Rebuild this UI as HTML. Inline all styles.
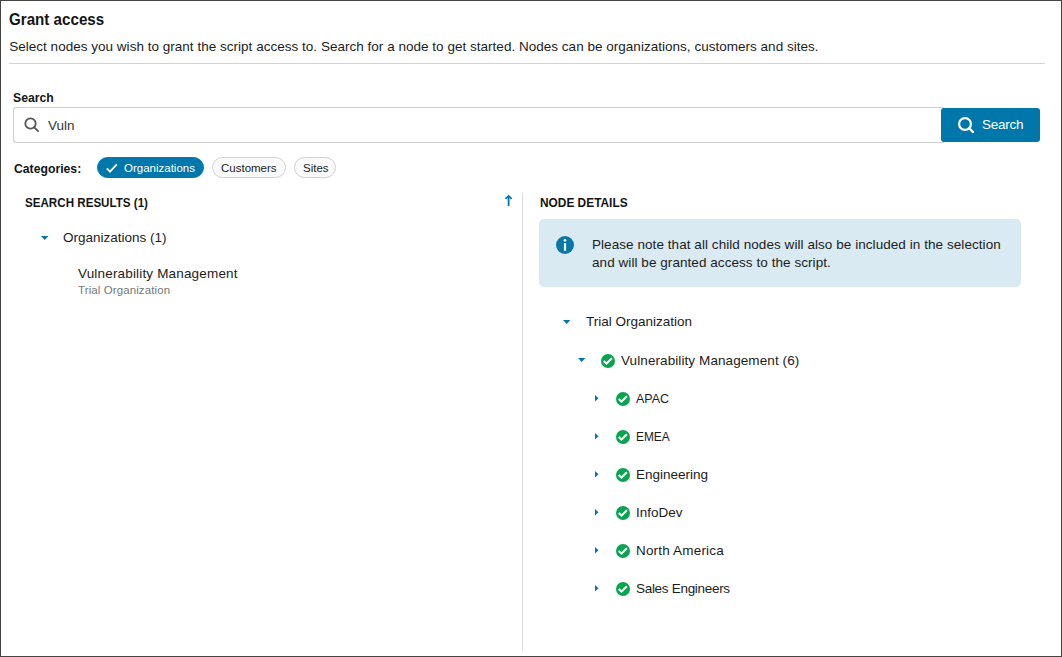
<!DOCTYPE html>
<html>
<head>
<meta charset="utf-8">
<style>
html,body{margin:0;padding:0;width:1062px;height:657px;overflow:hidden;background:#fff;}
body{font-family:"Liberation Sans",sans-serif;color:#1c1c1c;position:relative;}
.frame{position:absolute;left:0;top:0;width:1060px;height:655px;border:1px solid #444;}
.t{position:absolute;white-space:nowrap;line-height:1;}
.hr{position:absolute;left:9px;top:63px;width:1036px;height:1px;background:#d4d4d4;}
.input{position:absolute;left:13px;top:107px;width:930px;height:34px;border:1px solid #cfcfcf;border-right:none;border-radius:3px 0 0 3px;background:#fff;}
.btn{position:absolute;left:941px;top:108px;width:99px;height:34px;background:#0077aa;border-radius:3px;}
.chip{position:absolute;top:157px;height:19px;border-radius:11px;border:1px solid #d0d0d0;background:#fafafa;}
.chip.on{background:#0077aa;border-color:#0077aa;}
.divider{position:absolute;left:522px;top:193px;width:1px;height:458px;background:#dcdcdc;}
.info{position:absolute;left:539px;top:219px;width:482px;height:68px;background:#d9eaf2;border-radius:5px;}
svg{position:absolute;overflow:visible;}
</style>
</head>
<body>
<div class="frame"></div>
<div class="t" style="left:8.7px;top:11px;font-size:16.5px;font-weight:700;color:#141414;transform:scaleX(0.918);transform-origin:0 0;">Grant access</div>
<div class="t" style="left:9.2px;top:40px;font-size:13.5px;letter-spacing:0.02px;">Select nodes you wish to grant the script access to. Search for a node to get started. Nodes can be organizations, customers and sites.</div>
<div class="hr"></div>
<div class="t" style="left:13.3px;top:91px;font-size:13.5px;font-weight:700;color:#141414;transform:scaleX(0.905);transform-origin:0 0;">Search</div>
<div class="input"></div>
<svg style="left:23.6px;top:116.7px" width="16" height="16" viewBox="0 0 16 16"><circle cx="6.5" cy="6.5" r="5.2" fill="none" stroke="#555" stroke-width="1.8"/><line x1="10.3" y1="10.3" x2="14.1" y2="14.1" stroke="#555" stroke-width="1.8" stroke-linecap="round"/></svg>
<div class="t" style="left:48px;top:119px;font-size:13.5px;color:#333;">Vuln</div>
<div class="btn"></div>
<svg style="left:957.5px;top:116.6px" width="17" height="17" viewBox="0 0 17 17"><circle cx="7" cy="7" r="5.9" fill="none" stroke="#fff" stroke-width="2.2"/><line x1="11" y1="11" x2="15" y2="15" stroke="#fff" stroke-width="2.3" stroke-linecap="round"/></svg>
<div class="t" style="left:982px;top:118px;font-size:13.5px;letter-spacing:-0.25px;color:#fff;">Search</div>
<div class="t" style="left:13.6px;top:162px;font-size:13.5px;font-weight:700;color:#141414;transform:scaleX(0.905);transform-origin:0 0;">Categories:</div>
<div class="chip on" style="left:97px;width:105px;"></div>
<svg style="left:104.5px;top:161.5px" width="14" height="12" viewBox="0 0 14 12"><polyline points="1.8,6.3 5,9.6 11.8,2.4" fill="none" stroke="#fff" stroke-width="1.8"/></svg>
<div class="t" style="left:124px;top:163px;font-size:11.5px;color:#fff;">Organizations</div>
<div class="chip" style="left:212px;width:72px;"></div>
<div class="t" style="left:221px;top:163px;font-size:11.5px;">Customers</div>
<div class="chip" style="left:294px;width:40px;"></div>
<div class="t" style="left:303px;top:163px;font-size:11.5px;">Sites</div>
<div class="t" style="left:25.4px;top:196px;font-size:13.5px;font-weight:700;color:#141414;transform:scaleX(0.86);transform-origin:0 0;">SEARCH RESULTS (1)</div>
<svg style="left:504.8px;top:194px" width="8" height="13" viewBox="0 0 8 13"><line x1="3.6" y1="2.2" x2="3.6" y2="12" stroke="#0077aa" stroke-width="1.8"/><polyline points="0.5,4.9 3.6,1.9 6.7,4.9" fill="none" stroke="#0077aa" stroke-width="1.8"/></svg>
<svg style="left:41px;top:236px" width="7.4" height="4" viewBox="0 0 7.4 4"><polygon points="0,0 7.4,0 3.7,4" fill="#0077aa"/></svg>
<div class="t" style="left:63px;top:231px;font-size:13.5px;">Organizations (1)</div>
<div class="t" style="left:78px;top:267px;font-size:13.5px;letter-spacing:0.17px;">Vulnerability Management</div>
<div class="t" style="left:78px;top:285px;font-size:11.5px;letter-spacing:0.1px;color:#777;">Trial Organization</div>
<div class="divider"></div>
<div class="t" style="left:540.2px;top:196px;font-size:13.5px;font-weight:700;color:#141414;transform:scaleX(0.88);transform-origin:0 0;">NODE DETAILS</div>
<div class="info"></div>
<svg style="left:556px;top:236px" width="18" height="18" viewBox="0 0 18 18"><circle cx="9" cy="9" r="9" fill="#0a77a7"/><circle cx="9" cy="4.3" r="1.35" fill="#fff"/><rect x="7.9" y="7.1" width="2.2" height="7.7" fill="#fff"/></svg>
<div class="t" style="left:592px;top:238px;font-size:13.5px;letter-spacing:0.06px;">Please note that all child nodes will also be included in the selection</div>
<div class="t" style="left:592px;top:255.5px;font-size:13.5px;letter-spacing:0.06px;">and will be granted access to the script.</div>
<svg style="left:563px;top:320px" width="7.4" height="4" viewBox="0 0 7.4 4"><polygon points="0,0 7.4,0 3.7,4" fill="#0077aa"/></svg>
<div class="t" style="left:586px;top:315px;font-size:13.5px;">Trial Organization</div>
<svg style="left:578px;top:358px" width="7.4" height="4" viewBox="0 0 7.4 4"><polygon points="0,0 7.4,0 3.7,4" fill="#0077aa"/></svg>
<svg style="left:601px;top:354px" width="14" height="14" viewBox="0 0 14 14"><circle cx="7" cy="7" r="7" fill="#0aa350"/><polyline points="2.7,6.9 5.5,9.5 10.9,4.2" fill="none" stroke="#fff" stroke-width="2"/></svg>
<div class="t" style="left:621px;top:354px;font-size:13.5px;letter-spacing:0.09px;">Vulnerability Management (6)</div>
<svg style="left:595px;top:394.5px" width="3.5" height="6.5" viewBox="0 0 3.5 6.5"><polygon points="0,0 3.5,3.25 0,6.5" fill="#0077aa"/></svg>
<svg style="left:616px;top:392px" width="14" height="14" viewBox="0 0 14 14"><circle cx="7" cy="7" r="7" fill="#0aa350"/><polyline points="2.7,6.9 5.5,9.5 10.9,4.2" fill="none" stroke="#fff" stroke-width="2"/></svg>
<div class="t" style="left:636px;top:392px;font-size:13.5px;transform:scaleX(0.923);transform-origin:0 0;">APAC</div>
<svg style="left:595px;top:432.5px" width="3.5" height="6.5" viewBox="0 0 3.5 6.5"><polygon points="0,0 3.5,3.25 0,6.5" fill="#0077aa"/></svg>
<svg style="left:616px;top:430px" width="14" height="14" viewBox="0 0 14 14"><circle cx="7" cy="7" r="7" fill="#0aa350"/><polyline points="2.7,6.9 5.5,9.5 10.9,4.2" fill="none" stroke="#fff" stroke-width="2"/></svg>
<div class="t" style="left:636px;top:430px;font-size:13.5px;transform:scaleX(0.88);transform-origin:0 0;">EMEA</div>
<svg style="left:595px;top:470.5px" width="3.5" height="6.5" viewBox="0 0 3.5 6.5"><polygon points="0,0 3.5,3.25 0,6.5" fill="#0077aa"/></svg>
<svg style="left:616px;top:468px" width="14" height="14" viewBox="0 0 14 14"><circle cx="7" cy="7" r="7" fill="#0aa350"/><polyline points="2.7,6.9 5.5,9.5 10.9,4.2" fill="none" stroke="#fff" stroke-width="2"/></svg>
<div class="t" style="left:636px;top:468px;font-size:13.5px;">Engineering</div>
<svg style="left:595px;top:508.5px" width="3.5" height="6.5" viewBox="0 0 3.5 6.5"><polygon points="0,0 3.5,3.25 0,6.5" fill="#0077aa"/></svg>
<svg style="left:616px;top:506px" width="14" height="14" viewBox="0 0 14 14"><circle cx="7" cy="7" r="7" fill="#0aa350"/><polyline points="2.7,6.9 5.5,9.5 10.9,4.2" fill="none" stroke="#fff" stroke-width="2"/></svg>
<div class="t" style="left:636px;top:506px;font-size:13.5px;">InfoDev</div>
<svg style="left:595px;top:546.5px" width="3.5" height="6.5" viewBox="0 0 3.5 6.5"><polygon points="0,0 3.5,3.25 0,6.5" fill="#0077aa"/></svg>
<svg style="left:616px;top:544px" width="14" height="14" viewBox="0 0 14 14"><circle cx="7" cy="7" r="7" fill="#0aa350"/><polyline points="2.7,6.9 5.5,9.5 10.9,4.2" fill="none" stroke="#fff" stroke-width="2"/></svg>
<div class="t" style="left:636px;top:544px;font-size:13.5px;letter-spacing:0.18px;">North America</div>
<svg style="left:595px;top:584.5px" width="3.5" height="6.5" viewBox="0 0 3.5 6.5"><polygon points="0,0 3.5,3.25 0,6.5" fill="#0077aa"/></svg>
<svg style="left:616px;top:582px" width="14" height="14" viewBox="0 0 14 14"><circle cx="7" cy="7" r="7" fill="#0aa350"/><polyline points="2.7,6.9 5.5,9.5 10.9,4.2" fill="none" stroke="#fff" stroke-width="2"/></svg>
<div class="t" style="left:636px;top:582px;font-size:13.5px;letter-spacing:-0.3px;">Sales Engineers</div>
</body>
</html>
